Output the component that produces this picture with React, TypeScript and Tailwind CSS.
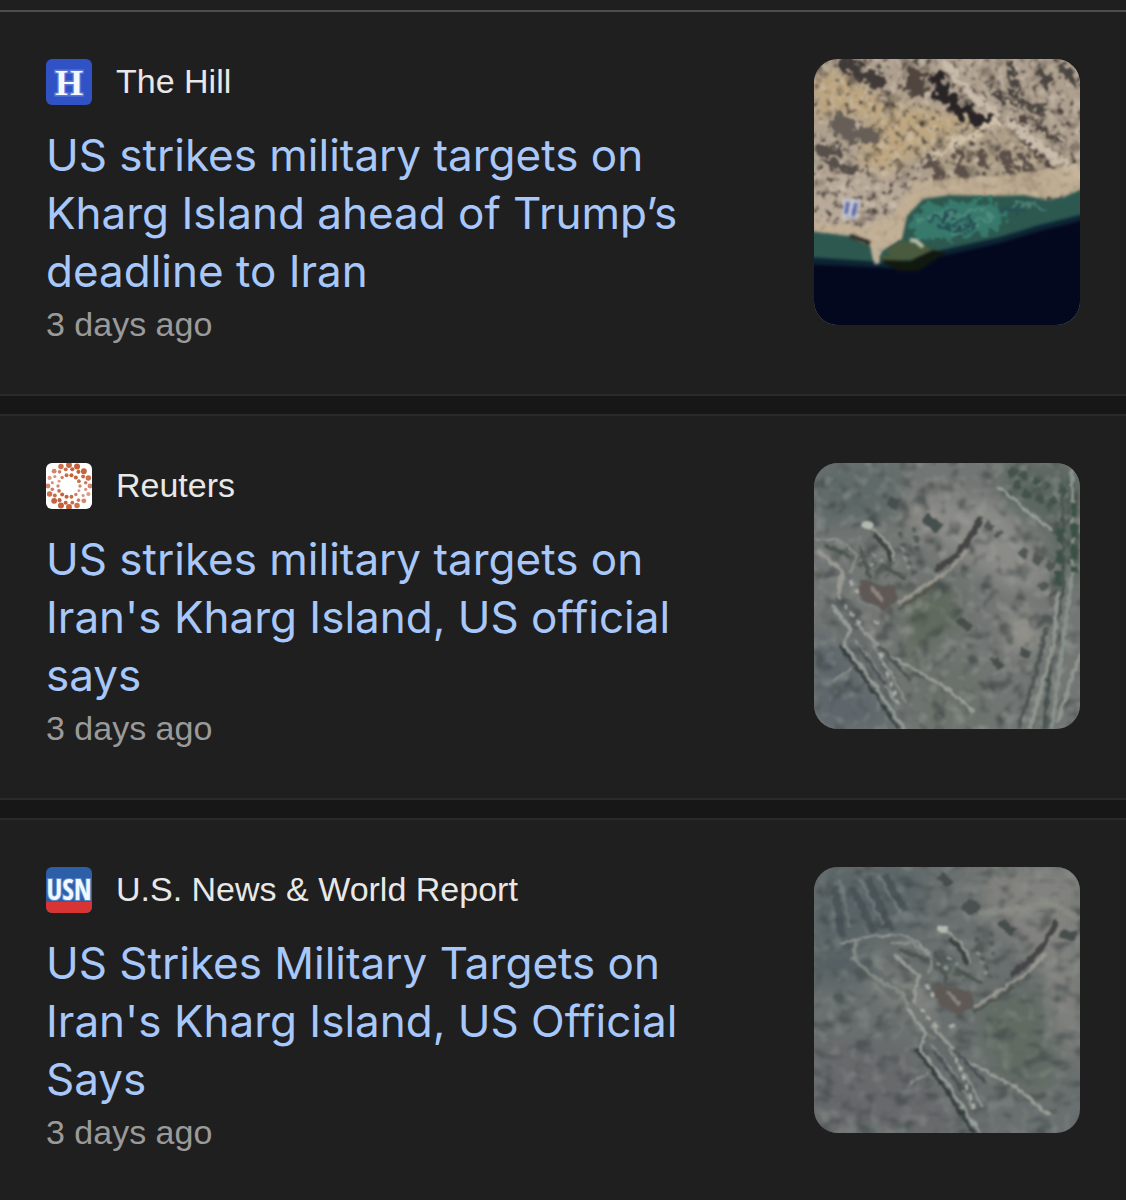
import type { ReactNode } from "react";

interface NewsItem {
    id: number;
    source: string;
    title: string;
    age: string;
    icon: ReactNode;
    thumbnail: ReactNode;
}

interface SpeckleProps {
    id: string;
    frequency: string;
    seed: number;
    // "r g b" in 0..1
    color: [number, number, number];
    gain: number;
    cutoff: number;
    opacity: number;
}

// Patchy noise in one colour, used as ground texture
function Speckle({ id, frequency, seed, color, gain, cutoff, opacity }: SpeckleProps) {
    const [r, g, b] = color;
    return (
        <>
            <filter id={id} x="0" y="0" width="100%" height="100%" colorInterpolationFilters="sRGB">
                <feTurbulence type="fractalNoise" baseFrequency={frequency} numOctaves={2} seed={seed} />
                <feColorMatrix values={`0 0 0 0 ${r} 0 0 0 0 ${g} 0 0 0 0 ${b} ${gain} 0 0 0 ${cutoff}`} />
                <feGaussianBlur stdDeviation="1" />
            </filter>
            <rect x="-6" y="-6" width="278" height="278" filter={`url(#${id})`} opacity={opacity} />
        </>
    );
}

function HillIcon() {
    return (
        <svg viewBox="0 0 46 46" className="size-full" aria-hidden="true">
            <rect width="46" height="46" fill="#3152c4" />
            <text x="23" y="36" textAnchor="middle" fontSize="36" fontWeight="700" fill="#f4f8ff" stroke="#7f9cf0" strokeWidth="3" strokeOpacity="0.5" paintOrder="stroke" fontFamily="Liberation Serif, serif">H</text>
        </svg>
    );
}

function ReutersIcon() {
    const rings = [
        { radius: 21, count: 16, size: 2.5 },
        { radius: 17, count: 16, size: 1.7 },
        { radius: 11, count: 14, size: 1.7 },
    ];
    return (
        <svg viewBox="0 0 46 46" className="size-full" aria-hidden="true">
            <filter id="reuters-soft" colorInterpolationFilters="sRGB"><feGaussianBlur stdDeviation="0.7" /></filter>
            <rect width="46" height="46" fill="#ffffff" />
            <g filter="url(#reuters-soft)">
                {rings.map((ring, ringIndex) =>
                    Array.from({ length: ring.count }, (_, i) => {
                        const angle = ((i + (ringIndex % 2) / 2) / ring.count) * Math.PI * 2;
                        // dots grow towards the upper right and lower left
                        const weight = Math.abs(Math.sin(angle - Math.PI / 8));
                        return (
                            <circle
                                key={`${ring.radius}-${i}`}
                                cx={23 + ring.radius * Math.cos(angle)}
                                cy={23 + ring.radius * Math.sin(angle)}
                                r={ring.size * (0.85 + 0.35 * weight)}
                                fill="#c45f38"
                                opacity={0.6 + 0.4 * weight}
                            />
                        );
                    })
                )}
            </g>
        </svg>
    );
}

function UsNewsIcon() {
    return (
        <svg viewBox="0 0 46 46" className="size-full" aria-hidden="true">
            <rect width="46" height="46" fill="#2c5fa8" />
            <rect y="35" width="46" height="11" fill="#d93434" />
            <text x="23" y="33" textAnchor="middle" fontSize="28" fontWeight="700" fill="#f2f8ff" stroke="#8fb6e6" strokeWidth="2" strokeOpacity="0.5" paintOrder="stroke" fontFamily="Liberation Sans Narrow, Open Sans Condensed, Liberation Sans, sans-serif">USN</text>
        </svg>
    );
}

function CoastThumbnail() {
    return (
        <svg viewBox="0 0 266 266" className="size-full" role="img" aria-label="Satellite view of a coastline">
            <defs>
                <filter id="coast-soft" x="-10%" y="-10%" width="120%" height="120%" colorInterpolationFilters="sRGB"><feGaussianBlur stdDeviation="1.5" /></filter>
                <filter id="coast-wide" x="-10%" y="-10%" width="120%" height="120%" colorInterpolationFilters="sRGB"><feGaussianBlur stdDeviation="7" /></filter>
                <filter id="coast-rough" x="-10%" y="-10%" width="120%" height="120%" colorInterpolationFilters="sRGB">
                    <feTurbulence type="fractalNoise" baseFrequency="0.12" numOctaves={3} seed={4} result="n" />
                    <feDisplacementMap in="SourceGraphic" in2="n" scale="20" xChannelSelector="R" yChannelSelector="G" />
                    <feGaussianBlur stdDeviation="1.3" />
                </filter>
            </defs>
            <rect width="266" height="266" fill="#aea08f" />
            <g filter="url(#coast-wide)">
                <path d="M0 15 L30 12 L60 35 L110 50 L170 60 L110 92 L60 120 L45 95 L60 60 L20 55 L0 65Z" fill="#bda680" />
                <path d="M120 90 L190 62 L266 100 L266 135 L110 135Z" fill="#ac9d87" />
                <path d="M-10 115 L90 112 L90 190 L-10 190Z" fill="#b8a998" />
            </g>
            <Speckle id="coast-dark" frequency="0.06" seed={12} color={[0.25, 0.22, 0.2]} gain={4} cutoff={-2.2} opacity={0.55} />
            <Speckle id="coast-fine" frequency="0.16" seed={7} color={[0.16, 0.14, 0.14]} gain={5} cutoff={-2.8} opacity={0.7} />
            <Speckle id="coast-light" frequency="0.12" seed={31} color={[0.83, 0.78, 0.71]} gain={4} cutoff={-2} opacity={0.55} />
            <g filter="url(#coast-rough)" fill="none">
                <path d="M28 2 L45 14 L68 26" stroke="#403a38" strokeWidth="13" />
                <path d="M104 10 L102 36" stroke="#51463f" strokeWidth="17" />
                <path d="M120 14 L130 36 L146 50 L174 64" stroke="#292526" strokeWidth="14" />
                <path d="M20 60 L38 76 L64 78" stroke="#665e57" strokeWidth="17" />
                <path d="M2 92 L28 92 M8 104 L44 110" stroke="#574f4a" strokeWidth="8" />
                <path d="M116 98 L128 126 M145 92 L150 122 M165 90 L172 112 M190 92 L200 122 M208 95 L222 128" stroke="#5c5049" strokeWidth="8" />
                <path d="M196 60 L218 90 L240 112 M205 55 L248 84" stroke="#4d443f" strokeWidth="4" />
                <path d="M196 2 L200 30 L212 52 M226 6 L234 32 M250 8 L262 26" stroke="#4a4541" strokeWidth="6" />
                <path d="M176 30 L196 44 L234 52" stroke="#4a4541" strokeWidth="5" />
                <path d="M118 98 L188 60" stroke="#cfc0a8" strokeWidth="5" />
                <path d="M192 62 L266 116 M132 6 L158 36 L184 56" stroke="#c8bcac" strokeWidth="7" />
            </g>
            <g filter="url(#coast-soft)">
                <path d="M100 122 L180 118 L266 106 L266 136 L180 141 L118 142 L96 160 L90 180 L62 200 L54 182 L0 174 L0 162 L54 168 L80 154Z" fill="#c4b196" opacity="0.75" />
                <path d="M29 140 L46 140 L43 160 L28 159Z" fill="#c9cfe5" opacity="0.75" />
                <path d="M34 143 L32 155 M42 144 L39 157" stroke="#4659a0" strokeWidth="3" />
            </g>
            <g filter="url(#coast-soft)">
                <path d="M-8 172 L36 177 L56 187 L60 204 L64 204 L68 192 L88 180 L93 157 L109 140 L136 136 L180 137 L210 136 L233 141 L250 138 L274 127 V274 H-8Z" fill="#2d584f" />
            </g>
            <g filter="url(#coast-rough)">
                <path d="M93 162 L112 144 L178 141 L194 154 L184 172 L130 181 L102 180Z" fill="#37796b" />
                <path d="M104 164 L136 150 M130 160 L170 148 M138 176 L178 156 M200 146 L232 148" stroke="#62998c" strokeWidth="4" opacity="0.6" />
                <path d="M117 160 L144 154 M122 168 L160 162 M142 175 L163 165 M186 150 L210 152" stroke="#264f55" strokeWidth="4" />
                <path d="M70 193 L88 180 L110 186 L122 193 L92 206 L68 205Z" fill="#4a5a3e" />
            </g>
            <g filter="url(#coast-soft)">
                <path d="M96 181 L102 182 L109 188" stroke="#bfc3aa" strokeWidth="4" fill="none" />
                <path d="M36 177 L56 184" stroke="#292d26" strokeWidth="4" />
                <path d="M-8 198 L53 202 L88 206 L119 193 L186 178 L222 167 L274 154 V274 H-8Z" fill="#0c2434" />
                <path d="M-8 205 L53 208 L88 210 L119 199 L186 184 L222 173 L274 160 V274 H-8Z" fill="#04081f" />
                <path d="M66 201 L96 202 L119 191 L132 194 L104 212 L84 212Z" fill="#10180f" />
                <path d="M61 184 L63 205" stroke="#bbb098" strokeWidth="5" />
            </g>
        </svg>
    );
}

// Roads and buildings of the compound, shared by both island views
function Compound() {
    return (
        <g fill="none" strokeLinejoin="round">
            <path d="M14 142 L38 168 L65 204 L94 262" stroke="#5c6463" strokeWidth="22" opacity="0.4" />
            <path d="M48 116 L60 120 L82 124 L84 138 L70 148 L50 138 L42 126Z" fill="#5f5955" />
            <path d="M57 124 L70 138" stroke="#8d8580" strokeWidth="4" />
            <path d="M18 142 L36 166 L30 182 L58 218 L90 266" stroke="#9aa09b" strokeWidth="3" />
            <path d="M26 182 L54 220 L84 266" stroke="#343c3c" strokeWidth="3" />
            <path d="M42 160 L76 194 L100 206 L128 222 L160 248" stroke="#999d96" strokeWidth="3" />
            <path d="M58 180 L80 216 L92 240 M40 176 L60 202 L82 238" stroke="#929994" strokeWidth="2" />
            <path d="M64 182 L96 216 M44 184 L72 222" stroke="#495153" strokeWidth="3" />
            <path d="M84 140 L112 122 L134 108 L156 86" stroke="#9b9991" strokeWidth="3" />
            <path d="M84 146 L124 120" stroke="#50544c" strokeWidth="3" />
            <path d="M121 108 L142 92 L155 76 L167 54" stroke="#454546" strokeWidth="6" />
            <path d="M54 62 L68 74 L78 86 L80 98" stroke="#a0a49d" strokeWidth="2" />
            <path d="M60 72 L72 84 L78 98" stroke="#3c4442" strokeWidth="4" />
            <path d="M4 88 L28 108 L24 136" stroke="#999a93" strokeWidth="4" />
            <path d="M0 76 L22 76 L42 90 L38 108" stroke="#8f9590" strokeWidth="2" />
            <path d="M10 82 L38 94 M46 84 L56 116 M66 102 L92 116" stroke="#4c5550" strokeWidth="4" />
            <path d="M44 100 L66 108 M50 92 L74 112 M86 70 L100 112 M100 64 L104 92" stroke="#525b56" strokeWidth="5" strokeDasharray="5 5" />
            <path d="M46 96 L64 104 M58 90 L70 100 M88 84 L96 108" stroke="#939993" strokeWidth="3" strokeDasharray="4 6" />
            <path d="M18 218 L38 206" stroke="#8f9590" strokeWidth="2" />
            <ellipse cx="53" cy="62" rx="6" ry="4" fill="#b4bab0" />
            <path d="M36 118 L46 132 M30 142 L48 162 M60 158 L70 160 M66 190 L86 246" stroke="#b3b3ab" strokeWidth="3" strokeDasharray="5 5" />
        </g>
    );
}

function AirstripThumbnail() {
    return (
        <svg viewBox="0 0 266 266" className="size-full" role="img" aria-label="Satellite view of an island compound">
            <defs>
                <filter id="strip-soft" x="-10%" y="-10%" width="120%" height="120%" colorInterpolationFilters="sRGB">
                    <feTurbulence type="fractalNoise" baseFrequency="0.15" numOctaves={2} seed={8} result="n" />
                    <feDisplacementMap in="SourceGraphic" in2="n" scale="6" xChannelSelector="R" yChannelSelector="G" />
                    <feGaussianBlur stdDeviation="1" />
                </filter>
                <filter id="strip-wide" x="-10%" y="-10%" width="120%" height="120%" colorInterpolationFilters="sRGB"><feGaussianBlur stdDeviation="9" /></filter>
            </defs>
            <rect width="266" height="266" fill="#727674" />
            <g filter="url(#strip-wide)">
                <path d="M0 0 H90 L80 56 L0 66Z" fill="#5f6a69" />
                <path d="M90 30 L190 40 L240 120 L200 130 L140 90 L90 60Z" fill="#8b8b87" />
                <path d="M92 130 L140 118 L150 160 L110 186 L90 180Z" fill="#606a5d" />
                <path d="M190 150 L226 150 L224 190 L196 190Z" fill="#93928b" />
                <path d="M0 160 L30 190 L84 266 H0Z" fill="#5d666b" />
                <path d="M190 0 H266 V120 L240 110 L240 70 L190 40Z" fill="#5b675f" />
                <path d="M80 180 L160 200 L180 266 H110Z" fill="#6b726b" />
            </g>
            <Speckle id="strip-dark" frequency="0.06" seed={9} color={[0.22, 0.25, 0.25]} gain={4} cutoff={-2.1} opacity={0.6} />
            <Speckle id="strip-light" frequency="0.08" seed={25} color={[0.64, 0.65, 0.63]} gain={3} cutoff={-1.5} opacity={0.45} />
            <g filter="url(#strip-soft)">
                <Compound />
                <g fill="none">
                    <path d="M196 6 L206 28 L236 40 L258 20 M206 10 L234 24" stroke="#43524c" strokeWidth="8" strokeDasharray="8 6" />
                    <path d="M184 24 L238 68" stroke="#989e97" strokeWidth="3" />
                    <path d="M258 0 L258 110 L238 266" stroke="#89928c" strokeWidth="4" />
                    <path d="M248 20 L250 120 L236 200 L230 266" stroke="#46524e" strokeWidth="3" />
                    <path d="M232 165 L222 210 L204 266" stroke="#4d5653" strokeWidth="4" />
                    <path d="M244 130 L240 180 L216 266 M266 190 L244 258" stroke="#90968f" strokeWidth="4" />
                    <path d="M260 40 L260 110 M246 66 L244 126" stroke="#3c5145" strokeWidth="7" strokeDasharray="14 7" />
                    <path d="M172 60 L186 72 M206 88 L240 104 M226 120 L240 132" stroke="#515754" strokeWidth="9" strokeDasharray="9 6" />
                    <path d="M110 54 L126 66 M74 38 L84 42" stroke="#454f4d" strokeWidth="10" />
                    <path d="M206 188 L216 192 M144 156 L156 166 M180 194 L186 206" stroke="#474e4b" strokeWidth="8" />
                </g>
            </g>
        </svg>
    );
}

function CompoundThumbnail() {
    return (
        <svg viewBox="0 0 266 266" className="size-full" role="img" aria-label="Satellite view of an island compound">
            <defs>
                <filter id="comp-soft" x="-10%" y="-10%" width="120%" height="120%" colorInterpolationFilters="sRGB">
                    <feTurbulence type="fractalNoise" baseFrequency="0.15" numOctaves={2} seed={8} result="n" />
                    <feDisplacementMap in="SourceGraphic" in2="n" scale="6" xChannelSelector="R" yChannelSelector="G" />
                    <feGaussianBlur stdDeviation="1" />
                </filter>
                <filter id="comp-wide" x="-10%" y="-10%" width="120%" height="120%" colorInterpolationFilters="sRGB"><feGaussianBlur stdDeviation="9" /></filter>
            </defs>
            <rect width="266" height="266" fill="#6a706f" />
            <g filter="url(#comp-wide)">
                <path d="M0 0 H110 L100 66 L50 70 L40 120 L0 120Z" fill="#5a6467" />
                <path d="M160 0 H266 V200 L240 160 L230 100 L180 60Z" fill="#82827e" />
                <path d="M160 140 L230 120 L240 220 L190 220Z" fill="#606b62" />
                <path d="M0 170 L90 180 L150 266 H0Z" fill="#67696b" />
                <path d="M48 100 L80 110 L120 140 L110 165 L90 150Z" fill="#868882" />
            </g>
            <Speckle id="comp-dark" frequency="0.05 0.08" seed={17} color={[0.22, 0.25, 0.26]} gain={4} cutoff={-2.05} opacity={0.5} />
            <Speckle id="comp-light" frequency="0.07" seed={40} color={[0.6, 0.62, 0.6]} gain={3} cutoff={-1.5} opacity={0.4} />
            <g filter="url(#comp-soft)">
                <path d="M20 18 L28 70 M38 20 L60 66 M54 12 L78 64 M70 8 L92 44" stroke="#414b51" strokeWidth="7" fill="none" opacity="0.7" />
                <path d="M26 12 L36 60 M46 12 L70 58 M64 8 L88 48" stroke="#7d8585" strokeWidth="3" fill="none" opacity="0.6" />
                <path d="M0 96 L50 98 L86 130" stroke="#505a60" strokeWidth="12" fill="none" opacity="0.45" />
                <path d="M26 76 L54 70 L90 68 L104 76 L118 90" stroke="#969d99" strokeWidth="2" fill="none" />
                <path d="M42 74 L40 92 L60 110 L88 126 L104 162 L122 172" stroke="#8c918b" strokeWidth="4" fill="none" opacity="0.8" />
                <path d="M164 46 L240 38 L266 52" stroke="#8f9189" strokeWidth="7" fill="none" opacity="0.6" />
                <path d="M186 54 L200 66 M246 66 L262 70 M126 8 L136 18" stroke="#464e4c" strokeWidth="9" />
                <ellipse cx="157" cy="40" rx="10" ry="7" fill="#4a5250" />
                {/* same compound, seen from further west */}
                <g transform="translate(76 0)">
                    <Compound />
                </g>
            </g>
        </svg>
    );
}

const newsItems: NewsItem[] = [
    {
        id: 1,
        source: "The Hill",
        title: "US strikes military targets on Kharg Island ahead of Trump’s deadline to Iran",
        age: "3 days ago",
        icon: <HillIcon />,
        thumbnail: <CoastThumbnail />,
    },
    {
        id: 2,
        source: "Reuters",
        title: "US strikes military targets on Iran's Kharg Island, US official says",
        age: "3 days ago",
        icon: <ReutersIcon />,
        thumbnail: <AirstripThumbnail />,
    },
    {
        id: 3,
        source: "U.S. News & World Report",
        title: "US Strikes Military Targets on Iran's Kharg Island, US Official Says",
        age: "3 days ago",
        icon: <UsNewsIcon />,
        thumbnail: <CompoundThumbnail />,
    },
];

function NewsCard({ item }: { item: NewsItem }) {
    return (
        <article className="flex items-start justify-between gap-12 border-y-2 border-[#2a2a2b] bg-[#1f1f1f] px-[46px] pt-[47px] pb-[46px] group-first:border-t-[#4d4d4d] group-last:border-b-0 group-last:pb-10">
            <div className="min-w-0 max-w-[660px] flex-1">
                <div className="flex h-[46px] items-center gap-6">
                    <span className="size-[46px] shrink-0 overflow-hidden rounded-md">{item.icon}</span>
                    <span className="pb-0.5 text-[34px] leading-10 text-[#e8e8e8]">{item.source}</span>
                </div>
                <h3 className="mt-[21px] font-['Inter',sans-serif] text-[44px] leading-[58px] font-normal text-[#a8c7fa]">
                    <a href="#">{item.title}</a>
                </h3>
                <p className="text-[34px] leading-12 text-[#9a9a9a]">{item.age}</p>
            </div>
            <div className="size-[266px] shrink-0 overflow-hidden rounded-3xl">{item.thumbnail}</div>
        </article>
    );
}

export default function App() {
    return (
        <main className="min-h-screen bg-[#1f1f1f] pt-[10px] font-['Liberation_Sans',sans-serif]">
            <ul className="flex flex-col gap-[18px] bg-[#171717]">
                {newsItems.map(item => (
                    <li key={item.id} className="group">
                        <NewsCard item={item} />
                    </li>
                ))}
            </ul>
        </main>
    );
}
